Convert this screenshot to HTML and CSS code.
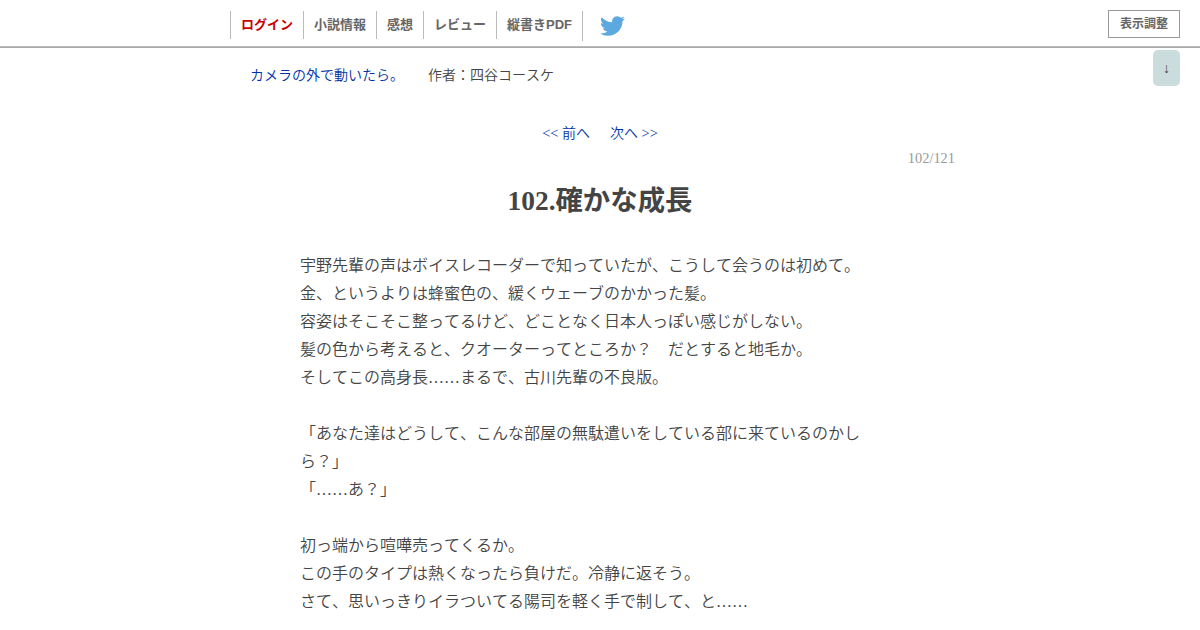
FILE: index.html
```html
<!DOCTYPE html>
<html lang="ja">

<head>
  <meta charset="UTF-8">
  <meta name="viewport" content="width=device-width, initial-scale=1.0">
  <title>カメラの外で動いたら。 - 102.確かな成長</title>
  <link rel="stylesheet" href="styles.css">
</head>

<body>
  <header class="header">
    <ul class="menu">
      <li class="menu__item"><a class="menu__link menu__link--login" href="#">ログイン</a></li>
      <li class="menu__item"><a class="menu__link" href="#">小説情報</a></li>
      <li class="menu__item"><a class="menu__link" href="#">感想</a></li>
      <li class="menu__item"><a class="menu__link" href="#">レビュー</a></li>
      <li class="menu__item"><a class="menu__link" href="#">縦書きPDF</a></li>
      <li class="menu__item menu__item--twitter">
        <a href="#">
          <svg class="menu__bird" viewBox="0 2 24 20" preserveAspectRatio="none">
            <path d="M23.95 4.57a10 10 0 0 1-2.82.77 4.96 4.96 0 0 0 2.16-2.72c-.95.55-2 .96-3.13 1.19a4.92 4.92 0 0 0-8.38 4.48C7.69 8.09 4.07 6.13 1.64 3.16a4.92 4.92 0 0 0 1.52 6.57 4.9 4.9 0 0 1-2.23-.61v.06a4.92 4.92 0 0 0 3.95 4.83 5 5 0 0 1-2.21.08 4.94 4.94 0 0 0 4.6 3.42A9.87 9.87 0 0 1 0 19.54a13.99 13.99 0 0 0 7.55 2.21c9.05 0 14-7.5 14-13.98 0-.21 0-.42-.02-.63a9.94 9.94 0 0 0 2.46-2.55z"/>
          </svg>
        </a>
      </li>
    </ul>
    <button class="header__settings" type="button">表示調整</button>
    <a class="header__down" href="#bottom">↓</a>
  </header>

  <main class="container">
    <div class="contents">
      <a class="contents__title" href="#">カメラの外で動いたら。</a>
      <span class="contents__author">作者：四谷コースケ</span>
    </div>

    <article class="novel">
      <nav class="pager">
        <a class="pager__link" href="#"><span class="pager__arrow">&lt;&lt; </span>前へ</a>
        <a class="pager__link" href="#">次へ<span class="pager__arrow"> &gt;&gt;</span></a>
      </nav>
      <div class="novel__number">102/121</div>
      <h1 class="novel__subtitle">102.確かな成長</h1>
      <div class="novel__text">
        宇野先輩の声はボイスレコーダーで知っていたが、こうして会うのは初めて。<br>
        金、というよりは蜂蜜色の、緩くウェーブのかかった髪。<br>
        容姿はそこそこ整ってるけど、どことなく日本人っぽい感じがしない。<br>
        髪の色から考えると、クオーターってところか？　だとすると地毛か。<br>
        そしてこの高身長……まるで、古川先輩の不良版。<br>
        <br>
        「あなた達はどうして、こんな部屋の無駄遣いをしている部に来ているのかしら？」<br>
        「……あ？」<br>
        <br>
        初っ端から喧嘩売ってくるか。<br>
        この手のタイプは熱くなったら負けだ。冷静に返そう。<br>
        さて、思いっきりイラついてる陽司を軽く手で制して、と……
      </div>
    </article>
  </main>
</body>

</html>
```
FILE: styles.css
```css
body {
  margin: 0;
  height: 630px;
  overflow: hidden;
  background-color: #fff;
  color: #444;
  font-family: "Liberation Serif", "Noto Sans CJK JP", serif;
  font-size: 14px;
  font-weight: 350;
  font-kerning: none;
}

a {
  color: #03a;
  text-decoration: none;
}

.header {
  position: relative;
  box-sizing: border-box;
  display: flex;
  justify-content: space-between;
  align-items: flex-start;
  height: 48px;
  padding: 10px 20px 0 230px;
  border-bottom: 1px solid #aaa;
  box-shadow: inset 0 -1px 0 #bbb;
  font-family: "Liberation Sans", "Noto Sans CJK JP", sans-serif;
}

.menu {
  display: flex;
  margin: 1px 0 0;
  padding: 0;
  list-style: none;
}

.menu__item {
  height: 28px;
  padding: 0 10px;
  border-left: 1px solid #bbb;
  font-size: 13px;
  font-weight: bold;
  line-height: 28px;
}

.menu__item--twitter {
  height: 30px;
  padding: 0 17px;
}

.menu__link {
  color: #666;
}

.menu__link--login {
  color: #c00;
}

.menu__bird {
  display: block;
  width: 25px;
  height: 20px;
  margin-top: 5px;
  fill: #5ba9de;
}

.header__settings {
  width: 72px;
  height: 28px;
  padding: 0 0 4px;
  border: 1px solid #999;
  background-color: #fff;
  color: #666;
  font-family: inherit;
  font-size: 12px;
  font-weight: bold;
}

.header__down {
  position: absolute;
  top: 50px;
  right: 20px;
  width: 27px;
  height: 36px;
  border-radius: 5px;
  background-color: #cadcdc;
  color: #444;
  font-family: "Liberation Serif", serif;
  line-height: 38px;
  text-align: center;
}

.container {
  width: 740px;
  margin: 0 auto;
}

.contents {
  display: flex;
  gap: 24px;
  padding: 18px 20px 0;
  line-height: 20px;
}

.pager {
  display: flex;
  justify-content: center;
  gap: 20px;
  margin-top: 37px;
  line-height: 20px;
}

.pager__arrow {
  font-size: 14.4px;
}

.novel__number {
  margin-top: 4px;
  padding-right: 15px;
  color: #999;
  font-size: 14.4px;
  line-height: 20px;
  text-align: right;
}

.novel__subtitle {
  margin: 13px 0 0;
  font-size: 27.4px;
  line-height: 40px;
  text-align: center;
}

.novel__text {
  width: 570px;
  margin: 31px 0 0 70px;
  font-size: 16px;
  line-height: 28px;
}
```
